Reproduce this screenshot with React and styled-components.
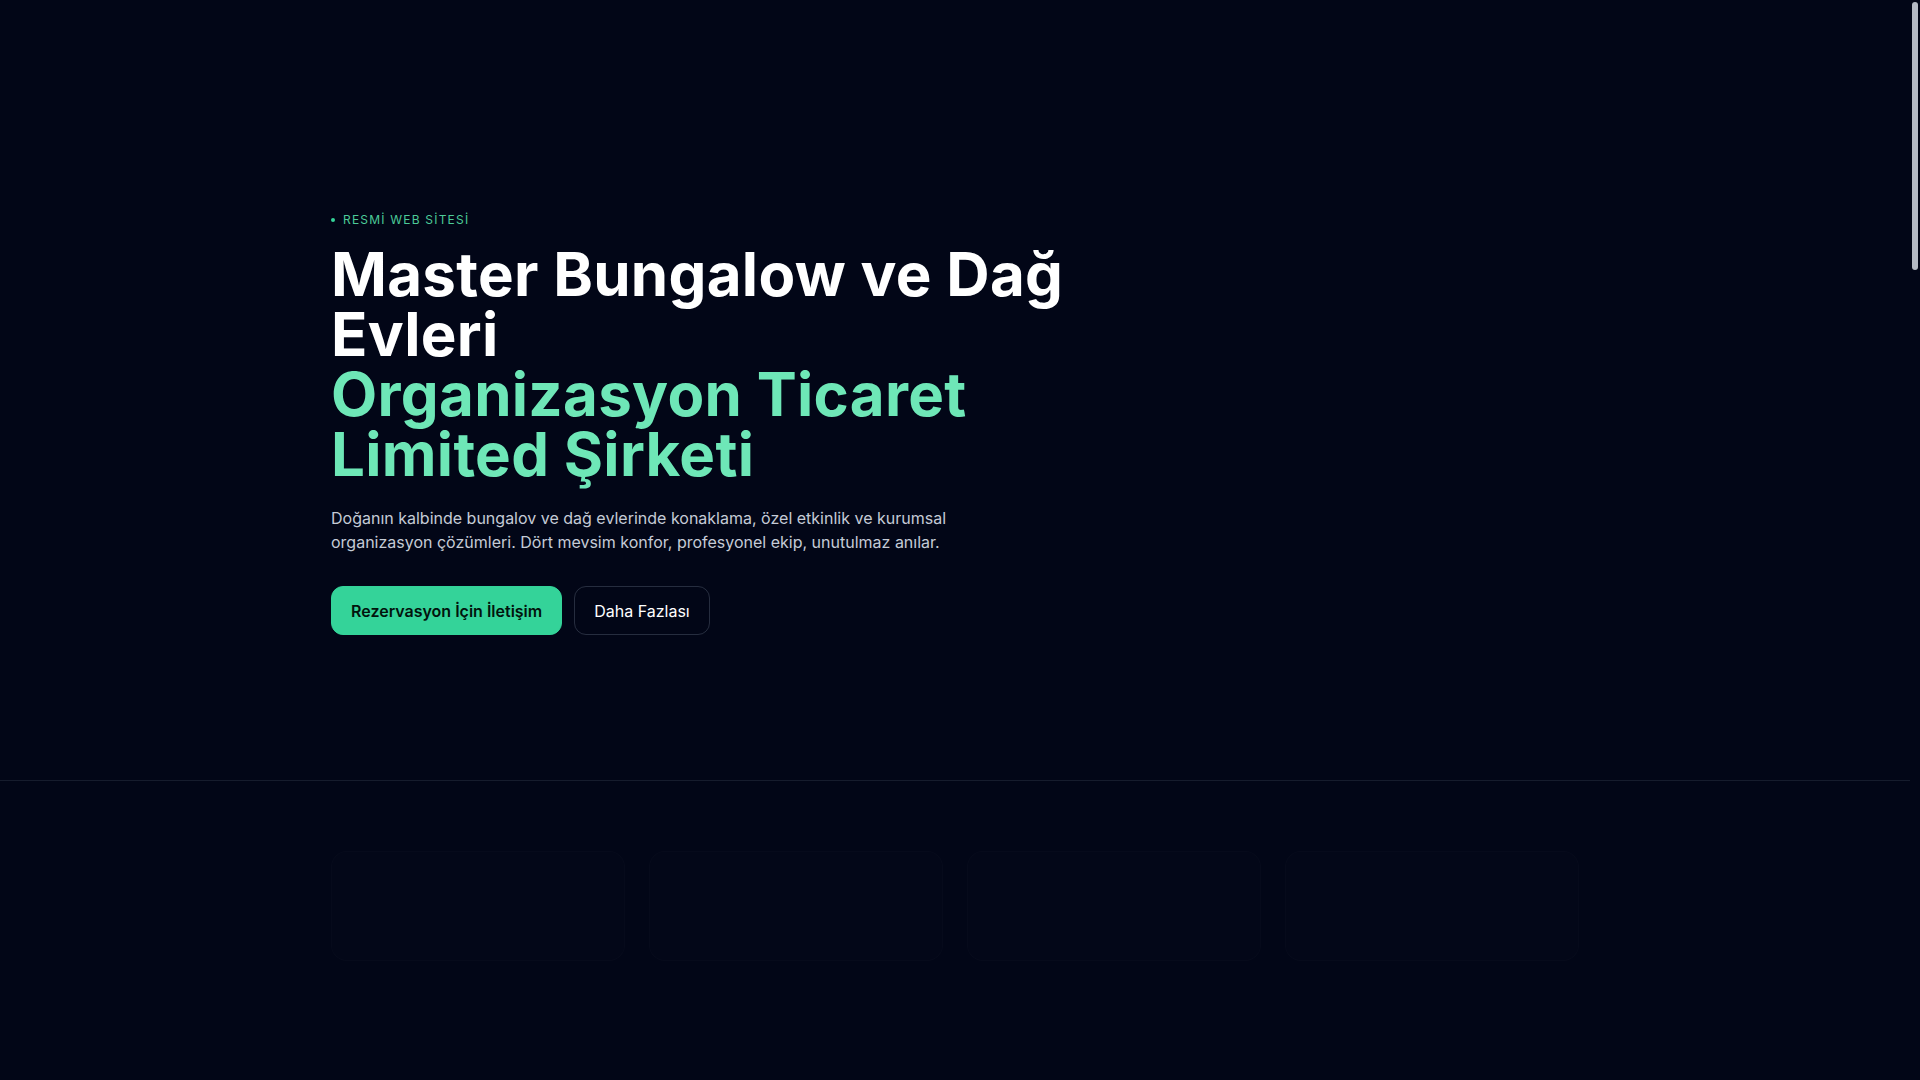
import React from "react";
import styled, { createGlobalStyle } from "styled-components";

const GlobalStyle = createGlobalStyle`
    * {
        box-sizing: border-box;
    }

    html, body {
        margin: 0;
        padding: 0;
        background: #020617;
    }

    body {
        font-family: Inter, "Noto Sans", sans-serif;
        color: #ffffff;
        -webkit-font-smoothing: antialiased;
    }
`

const Page = styled.div`
    min-height: 4320px;
    padding-right: 10px;
    background: #020617;
`

// custom scrollbar look of the page
const ScrollRail = styled.div`
    position: fixed;
    top: 0;
    right: 0;
    width: 10px;
    height: 100vh;
    background: #020617;
    z-index: 50;
`

const ScrollThumb = styled.div`
    width: 6px;
    height: 268px;
    margin: 2px auto 0;
    border-radius: 4px;
    background: #b4b9c4;
`

const Container = styled.div`
    max-width: 1280px;
    margin: 0 auto;
    padding: 0 16px;
`

const Hero = styled.section`
    padding: 210px 0 145px;
    border-bottom: 1px solid rgba(148, 163, 184, 0.14);
`

const HeroContent = styled.div`
    max-width: 768px;
`

const Eyebrow = styled.div`
    display: flex;
    align-items: center;
    gap: 8px;
    font-size: 12px;
    line-height: 20px;
    letter-spacing: 0.1em;
    text-transform: uppercase;
    color: #4cca98;

    &::before {
        content: "";
        width: 4px;
        height: 4px;
        border-radius: 50%;
        background: #34d399;
    }
`

const Title = styled.h1`
    margin: 14px 0 0;
    font-size: 60px;
    line-height: 60px;
    font-weight: 700;
    letter-spacing: 0.005em;
    color: #ffffff;
`

const Accent = styled.span`
    display: block;
    color: #6ee7b7;
`

const Lead = styled.p`
    margin: 22px 0 0;
    max-width: 672px;
    font-size: 16px;
    line-height: 24px;
    color: #c5cbd6;
`

const Actions = styled.div`
    display: flex;
    gap: 12px;
    margin-top: 32px;
`

const Button = styled.a`
    display: inline-flex;
    align-items: center;
    justify-content: center;
    height: 49px;
    padding: 0 19px;
    border-radius: 12px;
    font-size: 16px;
    text-decoration: none;
    cursor: pointer;
    transition: 0.3s;
    font-weight: ${p => (p.primary ? 600 : 400)};
    background: ${p => (p.primary ? "#34d399" : "transparent")};
    color: ${p => (p.primary ? "#02140d" : "#ffffff")};
    border: 1px solid ${p => (p.primary ? "#34d399" : "rgba(148, 163, 184, 0.25)")};

    :hover {
        opacity: 0.9;
    }
`

const Features = styled.section`
    padding: 70px 0;
`

const CardGrid = styled.div`
    display: grid;
    grid-template-columns: repeat(4, 1fr);
    gap: 24px;
`

const Card = styled.div`
    height: 110px;
    border-radius: 16px;
    background: rgba(255, 255, 255, 0.007);
    border: 1px solid rgba(255, 255, 255, 0.014);
`

function App() {
    return (
        <Page>
            <GlobalStyle/>
            <ScrollRail>
                <ScrollThumb/>
            </ScrollRail>
            <Hero>
                <Container>
                    <HeroContent>
                        <Eyebrow>Resmİ Web Sİtesİ</Eyebrow>
                        <Title>
                            Master Bungalow ve Dağ Evleri
                            <Accent>Organizasyon Ticaret Limited Şirketi</Accent>
                        </Title>
                        <Lead>
                            Doğanın kalbinde bungalov ve dağ evlerinde konaklama, özel etkinlik ve kurumsal
                            organizasyon çözümleri. Dört mevsim konfor, profesyonel ekip, unutulmaz anılar.
                        </Lead>
                        <Actions>
                            <Button primary>Rezervasyon İçin İletişim</Button>
                            <Button>Daha Fazlası</Button>
                        </Actions>
                    </HeroContent>
                </Container>
            </Hero>
            <Features>
                <Container>
                    <CardGrid>
                        <Card/>
                        <Card/>
                        <Card/>
                        <Card/>
                    </CardGrid>
                </Container>
            </Features>
        </Page>
    )
}

export default App;
